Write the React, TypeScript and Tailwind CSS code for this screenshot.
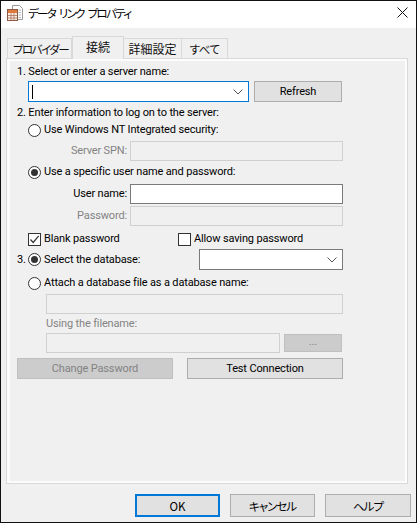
import React from "react";

const font = "font-['Roboto','Noto_Sans_CJK_JP',sans-serif]";
const cjk = "font-['Noto_Sans_CJK_JP',sans-serif] [font-feature-settings:'palt']";

function Radio({ on }: { on?: boolean }) {
  return (
    <span className="flex h-[13px] w-[13px] shrink-0 items-center justify-center rounded-full border border-[#333] bg-white">
      {on && <span className="h-[7px] w-[7px] rounded-full bg-[#333]" />}
    </span>
  );
}

function Check({ on }: { on?: boolean }) {
  return (
    <span className="flex h-[13px] w-[13px] shrink-0 items-center justify-center border border-[#333] bg-white">
      {on && (
        <svg width="11" height="11" viewBox="0 0 11 11" fill="none">
          <path d="M1.5 5.5 L4.2 8.5 L9.7 1.8" stroke="#333" strokeWidth="1.2" />
        </svg>
      )}
    </span>
  );
}

function Chevron() {
  return (
    <svg width="10" height="6" viewBox="0 0 10 6" fill="none">
      <path d="M0.5 0.5 L5 5 L9.5 0.5" stroke="#555" strokeWidth="1" />
    </svg>
  );
}

function Tab({ label, active, w, t = "" }: { label: string; active?: boolean; w: string; t?: string }) {
  return active ? (
    <div className={`z-10 -mb-px flex h-[23px] items-center justify-center whitespace-nowrap border border-b-0 border-[#d9d9d9] bg-[#f0f0f0] pb-[3px] ${w} ${t}`}>{label}</div>
  ) : (
    <div className={`flex h-[20px] items-center justify-center whitespace-nowrap border border-b-0 border-l-0 first:border-l border-[#d9d9d9] bg-[#f0f0f0] ${w} ${t}`}>{label}</div>
  );
}

function Btn({ label, disabled, className = "" }: { label: string; disabled?: boolean; className?: string }) {
  return (
    <div className={`flex items-center justify-center border ${disabled ? "border-[#bfbfbf] bg-[#cccccc] text-[#838383]" : "border-[#adadad] bg-[#e1e1e1] text-[#000]"} ${className}`}>
      {label}
    </div>
  );
}

export default function App() {
  return (
    <div className={`flex h-[523px] w-[417px] flex-col border border-[#111] bg-[#f0f0f0] text-[11px] leading-[16px] tracking-[-0.15px] text-[#000] ${font}`}>
      <div className="flex h-[27px] shrink-0 items-center justify-between bg-white pb-[4px] pl-[6px] pr-[8px]">
        <div className="flex items-center gap-[5px]">
          <svg width="16" height="16" viewBox="0 0 16 16" fill="none">
            <path d="M5.5 0.5 H12.5 L15.5 3.5 V14.5 H5.5 Z" fill="#fff" stroke="#9a9a9a" />
            <path d="M11.5 5 H14 M11.5 7.5 H14 M11.5 10 H14 M11.5 12.5 H14" stroke="#b8b8b8" />
            <rect x="0.5" y="4.5" width="10" height="11" fill="#fbeee2" stroke="#8a5a44" />
            <rect x="1" y="5" width="9" height="3" fill="#e07a3a" />
            <path d="M1 10.5 H10 M1 13 H10 M4 8 V15 M7 8 V15" stroke="#a8705a" strokeWidth="0.8" />
          </svg>
          <span className={`text-[11.5px] tracking-[-1.7px] [word-spacing:3px] ${cjk}`}>データ リンク プロパティ</span>
        </div>
        <svg width="11" height="11" viewBox="0 0 11 11" fill="none">
          <path d="M0.5 0.5 L10.5 10.5 M10.5 0.5 L0.5 10.5" stroke="#111" />
        </svg>
      </div>

      <div className="flex min-h-0 flex-1 flex-col px-[5px] pt-[8px]">
        <div className={`flex items-end pl-[1px] text-[12px] text-[#111] ${cjk}`}>
          <Tab label="プロバイダー" w="w-[65px] pl-[2px]" t="text-[11.5px] tracking-[-1.5px]" />
          <Tab label="接続" active w="w-[52px]" t="tracking-normal" />
          <Tab label="詳細設定" w="w-[58px]" t="tracking-normal" />
          <Tab label="すべて" w="w-[46px]" t="text-[11.5px] tracking-[-0.5px]" />
        </div>

        <div className="h-[426px] w-[402px] shrink-0 border border-[#d9d9d9] bg-[#fcfcfc] pb-[2px] pl-[3px] pr-[2px] pt-[2px]">
          <div className="h-full bg-[#f0f0f0] pl-[7px] pt-[3px]">
            <div className="w-[326px]">
              <div className="h-[16px]">1. Select or enter a server name:</div>
              <div className="mt-[1px] flex pl-[11px]">
                <div className="flex h-[21px] w-[221px] items-center justify-between border border-[#0078d7] bg-white pl-[3px] pr-[5px]">
                  <span className="h-[14px] w-px bg-black" />
                  <Chevron />
                </div>
                <Btn label="Refresh" className="ml-[5px] h-[21px] w-[88px]" />
              </div>

              <div className="mt-[3px] h-[16px]">2. Enter information to log on to the server:</div>
              <div className="mt-[1px] flex h-[16px] items-center gap-[3px] pl-[11px]"><Radio />Use Windows NT Integrated security:</div>
              <div className="mt-[3px] flex items-center justify-end">
                <span className="mr-[3px] text-[#838383]">Server SPN:</span>
                <div className="h-[20px] w-[213px] border border-[#d0d0d0] bg-[#f0f0f0]" />
              </div>
              <div className="mt-[3px] flex h-[16px] items-center gap-[3px] pl-[11px]"><Radio on />Use a specific user name and password:</div>
              <div className="mt-[4px] flex items-center justify-end">
                <span className="mr-[3px]">User name:</span>
                <div className="h-[20px] w-[213px] border border-[#7a7a7a] bg-white" />
              </div>
              <div className="mt-[2px] flex items-center justify-end">
                <span className="mr-[3px] text-[#838383]">Password:</span>
                <div className="h-[20px] w-[213px] border border-[#d0d0d0] bg-[#f0f0f0]" />
              </div>
              <div className="mt-[5px] flex h-[16px] items-center pl-[11px]">
                <span className="flex w-[150px] items-center gap-[3px]"><Check on />Blank password</span>
                <span className="flex items-center gap-[3px]"><Check />Allow saving password</span>
              </div>
              <div className="mt-[2px] flex h-[21px] items-center">
                <span className="w-[11px]">3.</span>
                <span className="flex w-[171px] items-center gap-[3px]"><Radio on />Select the database:</span>
                <div className="flex h-[21px] w-[144px] items-center justify-end border border-[#7a7a7a] bg-white pr-[5px]"><Chevron /></div>
              </div>
              <div className="mt-[5px] flex h-[16px] items-center gap-[3px] pl-[11px]"><Radio />Attach a database file as a database name:</div>
              <div className="ml-[29px] mt-[3px] h-[20px] w-[297px] border border-[#d0d0d0] bg-[#f0f0f0]" />
              <div className="ml-[29px] mt-[2px] h-[16px] text-[#838383]">Using the filename:</div>
              <div className="ml-[29px] mt-[1px] flex items-center">
                <div className="h-[20px] w-[234px] border border-[#d0d0d0] bg-[#f0f0f0]" />
                <Btn label="..." disabled className="ml-[4px] h-[18px] w-[58px] pb-[2px]" />
              </div>
              <div className="mt-[5px] flex justify-between">
                <Btn label="Change Password" disabled className="h-[21px] w-[156px]" />
                <Btn label="Test Connection" className="h-[21px] w-[156px]" />
              </div>
            </div>
          </div>
        </div>

        <div className={`mt-[10px] flex justify-end gap-[10px] text-[11.5px] tracking-[-1px] text-[#111] ${cjk}`}>
          <Btn label="OK" className="h-[23px] w-[85px] border-2 !border-[#0078d7] tracking-normal" />
          <Btn label="キャンセル" className="h-[23px] w-[85px]" />
          <Btn label="ヘルプ" className="h-[23px] w-[86px]" />
        </div>
      </div>
    </div>
  );
}
